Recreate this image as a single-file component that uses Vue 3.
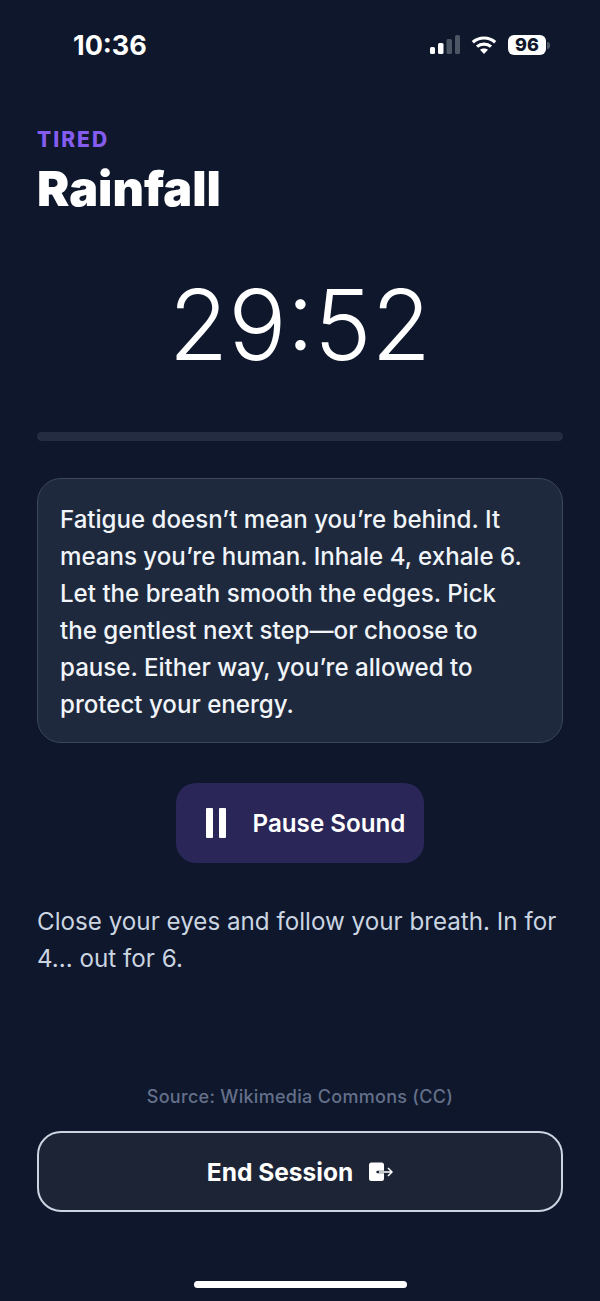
<template>
  <div class="screen">
    <div class="status">
      <span class="time">10:36</span>
      <div class="status-icons">
        <svg class="signal" width="30" height="20" viewBox="0 0 30 20">
          <rect x="0" y="12" width="5" height="7" rx="1.500" fill="#fff" />
          <rect x="8" y="8" width="5.500" height="11" rx="1.500" fill="#fff" />
          <rect x="16.500" y="4" width="5.500" height="15" rx="1.500" fill="#4b5563" />
          <rect x="25" y="0" width="5" height="19" rx="1.500" fill="#4b5563" />
        </svg>
        <svg class="wifi" width="26" height="20" viewBox="0 0 26 20" fill="none" stroke="#fff" stroke-width="3.200">
          <path d="M1.800 7.200C8 1.600 18 1.600 24.200 7.200" />
          <path d="M6 11.600C9.800 8.200 16.200 8.200 20 11.600" />
          <path d="M13 19l-4-4.200c2.200-1.800 5.800-1.800 8 0z" fill="#fff" stroke="none" />
        </svg>
        <div class="battery"><span class="level">96</span><span class="nub"></span></div>
      </div>
    </div>

    <main class="content">
      <div class="mood">TIRED</div>
      <h1 class="title">Rainfall</h1>
      <div class="timer">29:52</div>
      <div class="progress"><div class="progress-fill" :style="{ width: progress + '%' }"></div></div>

      <div class="card">{{ message }}</div>

      <button class="pause">
        <svg width="31" height="30" viewBox="0 0 31 30">
          <rect x="11" y="0" width="7" height="30" rx="1" fill="#fff" />
          <rect x="24" y="0" width="7" height="30" rx="1" fill="#fff" />
        </svg>
        <span>Pause Sound</span>
      </button>

      <p class="hint">Close your eyes and follow your breath. In for 4... out for 6.</p>

      <div class="source">Source: Wikimedia Commons (CC)</div>

      <button class="end">
        <span>End Session</span>
        <svg width="25" height="20" viewBox="0 0 25 20">
          <path d="M3.500 0.500h10A2.500 2.500 0 0 1 16 3V8.800H9.500a1.200 1.200 0 0 0 0 2.400H16v5.300a2.500 2.500 0 0 1-2.500 2.500h-10A2.500 2.500 0 0 1 1 16.500V3A2.500 2.500 0 0 1 3.500 0.500z" fill="#fff" />
          <path d="M11 10h13M20 6l4 4-4 4" fill="none" stroke="#fff" stroke-width="1.500" />
        </svg>
      </button>
    </main>

    <div class="home-bar"></div>
  </div>
</template>

<script setup>
const progress = 0
const message = "Fatigue doesn’t mean you’re behind. It means you’re human. Inhale 4, exhale 6. Let the breath smooth the edges. Pick the gentlest next step—or choose to pause. Either way, you’re allowed to protect your energy."
</script>

<style>
body {
  background: #0e172b;
}
</style>

<style scoped>
.screen {
  position: relative;
  width: 600px;
  height: 1301px;
  overflow: hidden;
  background: #0e172b;
  color: #fff;
  font-family: Inter, "Noto Sans", sans-serif;
}

.status {
  display: flex;
  justify-content: space-between;
  align-items: center;
  height: 30px;
  padding: 30px 50px 0 73px;
}

.time {
  font-size: 27px;
  font-weight: 700;
}

.status-icons {
  display: flex;
  align-items: center;
  gap: 11px;
}

.battery {
  display: flex;
  align-items: center;
  gap: 1px;
}

.level {
  display: block;
  width: 38px;
  height: 20px;
  border-radius: 6px;
  background: #fff;
  color: #0e172b;
  font-size: 18px;
  font-weight: 800;
  line-height: 20px;
  text-align: center;
}

.nub {
  width: 3px;
  height: 7px;
  border-radius: 0 3px 3px 0;
  background: #4b5563;
}

.content {
  padding: 68px 37px 0;
}

.mood {
  color: #845cf0;
  font-size: 21px;
  font-weight: 800;
  letter-spacing: 2px;
  line-height: 24px;
}

.title {
  margin: 8px 0 0;
  font-size: 48.500px;
  font-weight: 900;
  line-height: 58px;
}

.timer {
  margin-top: 49px;
  text-align: center;
  font-size: 97px;
  font-weight: 300;
  line-height: 116px;
}

.progress {
  height: 9px;
  margin-top: 49px;
  border-radius: 5px;
  background: #232c40;
}

.progress-fill {
  height: 100%;
  background: #8b5cf6;
}

.card {
  box-sizing: border-box;
  height: 265px;
  margin-top: 37px;
  padding: 22px 24px 22px 22px;
  border: 1px solid #3a475c;
  border-radius: 24px;
  background: #1e293d;
  color: #f1f5f9;
  font-size: 24.100px;
  font-weight: 500;
  line-height: 37px;
}

.pause {
  display: flex;
  align-items: center;
  justify-content: center;
  gap: 27px;
  width: 248px;
  height: 80px;
  margin: 40px auto 0;
  border: none;
  border-radius: 20px;
  background: #2b2658;
  color: #fff;
  font-family: inherit;
  font-size: 24.200px;
  font-weight: 600;
}

.hint {
  margin: 40px 0 0;
  color: #cbd5e1;
  font-size: 24.200px;
  line-height: 37px;
}

.source {
  margin-top: 108px;
  color: #64708a;
  font-size: 18px;
  font-weight: 500;
  letter-spacing: 0.300px;
  line-height: 24px;
  text-align: center;
}

.end {
  display: flex;
  align-items: center;
  justify-content: center;
  gap: 15px;
  box-sizing: border-box;
  width: 100%;
  height: 81px;
  margin-top: 22px;
  border: 2px solid #cbd5e1;
  border-radius: 24px;
  background: #1d2436;
  color: #fff;
  font-family: inherit;
  font-size: 24.500px;
  font-weight: 700;
}

.home-bar {
  position: absolute;
  left: 194px;
  bottom: 13px;
  width: 213px;
  height: 7px;
  border-radius: 4px;
  background: #fff;
}
</style>
